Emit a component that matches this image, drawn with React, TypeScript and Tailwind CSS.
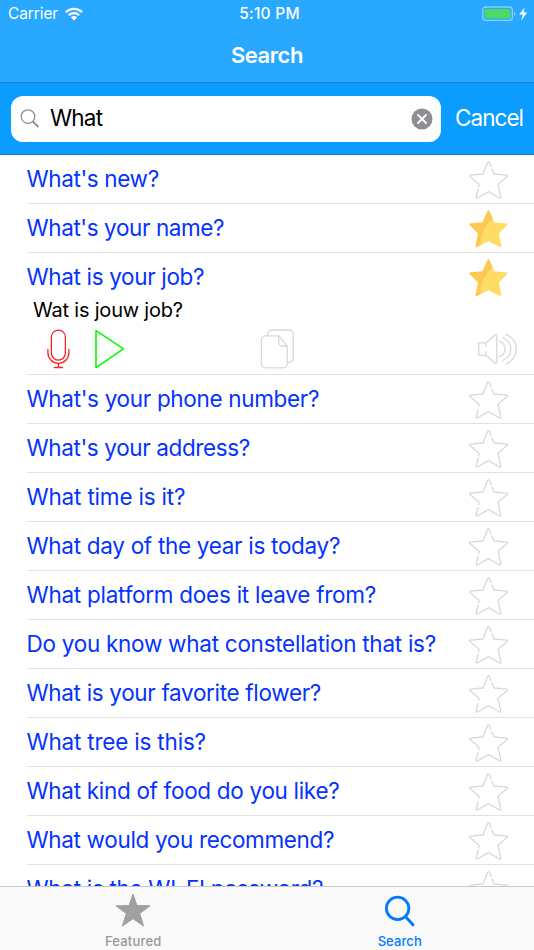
import { clsx } from "clsx";

interface Phrase {
  text: string;
  starred?: boolean;
  translation?: string;
  tracking: string;
}

const phrases: Phrase[] = [
  { text: "What's new?", tracking: "tracking-[-0.37px]" },
  { text: "What's your name?", starred: true, tracking: "tracking-[-0.4px]" },
  { text: "What is your job?", starred: true, translation: "Wat is jouw job?", tracking: "tracking-[-0.34px]" },
  { text: "What's your phone number?", tracking: "tracking-[-0.32px]" },
  { text: "What's your address?", tracking: "tracking-[-0.37px]" },
  { text: "What time is it?", tracking: "tracking-[-0.18px]" },
  { text: "What day of the year is today?", tracking: "tracking-[-0.3px]" },
  { text: "What platform does it leave from?", tracking: "tracking-[-0.26px]" },
  { text: "Do you know what constellation that is?", tracking: "tracking-[-0.27px]" },
  { text: "What is your favorite flower?", tracking: "tracking-[-0.33px]" },
  { text: "What tree is this?", tracking: "tracking-[-0.2px]" },
  { text: "What kind of food do you like?", tracking: "tracking-[-0.31px]" },
  { text: "What would you recommend?", tracking: "tracking-[-0.34px]" },
  { text: "What is the WI-FI password?", tracking: "tracking-[-0.31px]" },
];

const STAR = "M20.5 1.8 26 14 39 15.2 30.2 24.3 32.8 37.6 20.5 31.6 8.2 37.6 10.8 24.3 2 15.2 15 14Z";

function StarIcon({ starred = false }: { starred?: boolean }) {
  if (starred) {
    return (
      <svg viewBox="0 0 41 40" className="h-10 w-[41px]" strokeLinejoin="round">
        <path d={STAR} fill="#ffdc64" stroke="#ffdc64" strokeWidth="1.3" />
        <path
          d="M20.5 1.8 24 9.5C16 15.5 12 25 11.8 35.9L8.2 37.6 10.8 24.3 2 15.2 15 14Z"
          fill="#ffc850"
          stroke="#ffc850"
          strokeWidth="1.3"
        />
      </svg>
    );
  }
  return (
    <svg
      viewBox="0 0 41 40"
      className="h-10 w-[41px]"
      fill="none"
      stroke="#d8d8d8"
      strokeWidth="1.3"
      strokeLinecap="round"
      strokeLinejoin="round"
    >
      <path d="M23 6.5 21.3 2.3Q20.5 1 19.7 2.3L15 14 2.4 15.1Q.8 15.5 1.9 16.6L11 24.3 10.6 26.7" />
      <path d="M10.1 29.4 8.2 37Q8.1 38.5 9.4 38L20.5 31.6 31.6 38Q32.9 38.5 32.8 37L30 24.3 39.1 16.6Q40.2 15.5 38.6 15.1L26 14 23.9 8.8" />
    </svg>
  );
}

function StatusBar() {
  return (
    <div className="grid h-7 grid-cols-3 items-center pl-2 pr-[6px] text-[15.5px] leading-7">
      <div className="flex items-center gap-[7px]">
        <span className="w-[50px] tracking-[-0.1px]">Carrier</span>
        <svg viewBox="0 0 18 14" className="h-3.5 w-[18px]" fill="none" stroke="#fff" strokeWidth="2.3">
          <path d="M.9 5.1a11.6 11.6 0 0 1 16.2 0M3.8 8.2a7.4 7.4 0 0 1 10.4 0" />
          <path d="M5.9 10.4a4.4 4.4 0 0 1 6.2 0L9 13.5Z" fill="#fff" stroke="none" />
        </svg>
      </div>
      <span className="pl-[3px] text-center text-[15.5px] font-medium tracking-[0.25px]">5:10 PM</span>
      <svg viewBox="0 0 46 16" className="mb-px h-4 w-[46px] justify-self-end">
        <rect x=".7" y="1" width="29.6" height="13.4" rx="3" fill="none" stroke="#fff" strokeOpacity=".45" strokeWidth="1.3" />
        <rect x="2.5" y="3" width="26" height="9.6" rx="1.4" fill="#4cd964" />
        <path d="M32 5.5q1.6.7 1.6 2.3T32 10.1Z" fill="#fff" fillOpacity=".45" />
        <path d="m42.8 1.4-5.7 7.2h3.6l-1.4 5.8 5.8-8h-3.6Z" fill="#fff" />
      </svg>
    </div>
  );
}

function SearchBar() {
  return (
    <div className="flex h-[72px] items-center border-b border-[#087fce] bg-[#0a9cff] pl-[11px]">
      <div className="flex h-[46px] w-[430px] items-center rounded-[12px] bg-white pl-[9px] pr-[8px]">
        <svg viewBox="0 0 19 19" className="h-[19px] w-[19px]" fill="none" stroke="#8e8e93" strokeWidth="1.3">
          <circle cx="8" cy="7.6" r="6.8" />
          <path d="m12.8 12.4 5.6 5.6" strokeWidth="1.9" />
        </svg>
        <span className="ml-[11px] flex-1 pb-px text-[22.5px] leading-[44px] tracking-[-0.8px] text-black">What</span>
        <svg viewBox="0 0 22 22" className="h-[22px] w-[22px]">
          <circle cx="11" cy="11" r="10.5" fill="#8e8e93" />
          <path d="m7 7 8 8m0-8-8 8" stroke="#fff" strokeWidth="2" strokeLinecap="round" />
        </svg>
      </div>
      <button type="button" className="ml-[14px] pb-px text-[22.5px] tracking-[-0.95px] text-white">
        Cancel
      </button>
    </div>
  );
}

function PhraseTools() {
  return (
    <div className="flex h-[47px] items-center pl-[19px] pr-[15px]">
      <svg viewBox="0 0 24 40" className="h-10 w-6" fill="none" stroke="#ff2020" strokeWidth="1.3" strokeLinecap="round">
        <rect x="5.4" y="1.1" width="14" height="30" rx="7" />
        <path d="M1.9 20.5v3.3a10.5 10.5 0 0 0 21 0v-3.3M12.4 34.4v4M8.3 38.5h8.2" />
      </svg>
      <svg viewBox="0 0 31 40" className="ml-[24px] h-10 w-[31px]" fill="none" stroke="#00ff00" strokeWidth="1.6" strokeLinejoin="round">
        <path d="M2 1.6v37l27.5-18.8Z" />
      </svg>
      <svg viewBox="0 0 35 40" className="ml-[135px] h-10 w-[35px]" fill="none" stroke="#d8d8d8" strokeWidth="1.3" strokeLinejoin="round">
        <path d="M7.8 6.3V5a4 4 0 0 1 4-4h17.5a4 4 0 0 1 4 4v24.4a4 4 0 0 1-4 4h-1.7" />
        <path d="M18.7 6.9H5.4a4 4 0 0 0-4 4v23.9a4 4 0 0 0 4 4h17.8a4 4 0 0 0 4-4V17Zm0 0v6.5a3.6 3.6 0 0 0 3.6 3.6h4.9" />
      </svg>
      <svg viewBox="0 0 42 32" className="ml-auto mr-px h-8 w-[42px]" fill="none" stroke="#d8d8d8" strokeWidth="1.3" strokeLinecap="round" strokeLinejoin="round">
        <path d="M10 13.4V9.8H2.7v12.5H10V18.6M10 9.8 18.9 2.1q1.9-1.2 1.9.8v26.2q0 2-1.9.8L10 22.3" />
        <path d="M23.4 8.3c7.4 3 7.4 12.6 0 15.6M26.8 4.7c10.6 5 10.6 17.8 0 22.8M30.3 1.3c13.4 6.5 13.4 23.1 0 29.6" />
      </svg>
    </div>
  );
}

function PhraseRow({ text, starred, translation, tracking }: Phrase) {
  return (
    <li className={clsx("ml-[27px] shrink-0 border-b border-[#e2e2e4]", translation ? "h-[122px]" : "h-[49px]")}>
      <div className="flex h-[49px] items-center justify-between pr-[25px]">
        <span className={clsx("-ml-[0.5px] whitespace-nowrap pb-px text-[22.5px] leading-[46px] text-[#0433ff]", tracking)}>
          {text}
        </span>
        <StarIcon starred={starred} />
      </div>
      {translation && (
        <>
          <p className="h-[23px] pl-[6px] text-[20px] leading-[17px] tracking-[-0.2px] text-black">{translation}</p>
          <PhraseTools />
        </>
      )}
    </li>
  );
}

function TabBar() {
  return (
    <nav className="grid h-16 shrink-0 grid-cols-2 border-t border-[#c9c9cb] bg-[#f9f9f9] pr-px text-[13px] font-medium leading-4">
      <div className="flex flex-col items-center text-[#979797]">
        <svg viewBox="0 0 36 36" className="mt-[5px] h-9 w-9" fill="#a0a0a0" stroke="#a0a0a0" strokeLinejoin="round">
          <path d="m18 2 3.9 11.6 13.1.2-10.3 7.8 3.9 12.4L18 26.7 7.4 34l3.9-12.4L1 13.8l13.1-.2Z" />
        </svg>
        <span className="mt-[5px] tracking-[0.2px]">Featured</span>
      </div>
      <div className="flex flex-col items-center text-[#007aff]">
        <svg viewBox="0 0 36 36" className="mt-[5px] h-9 w-9" fill="none" stroke="#007aff" strokeWidth="2.8" strokeLinecap="round">
          <circle cx="15.6" cy="16.4" r="11.2" />
          <path d="m23.6 24.8 7.4 8" strokeWidth="3" />
        </svg>
        <span className="mt-[5px] tracking-[0.1px]">Search</span>
      </div>
    </nav>
  );
}

export default function App() {
  return (
    <div className="flex h-[950px] w-[534px] flex-col overflow-hidden bg-white font-['Inter',sans-serif]">
      <header className="h-[155px] shrink-0 text-white">
        <div className="h-[83px] border-b border-[#1a84cc] bg-[#28a8ff]">
          <StatusBar />
          <h1 className="text-center text-[22px] font-semibold leading-[54px] tracking-[-0.45px]">Search</h1>
        </div>
        <SearchBar />
      </header>
      <ul className="flex min-h-0 flex-1 flex-col overflow-hidden">
        {phrases.map((phrase) => (
          <PhraseRow key={phrase.text} {...phrase} />
        ))}
      </ul>
      <TabBar />
    </div>
  );
}
